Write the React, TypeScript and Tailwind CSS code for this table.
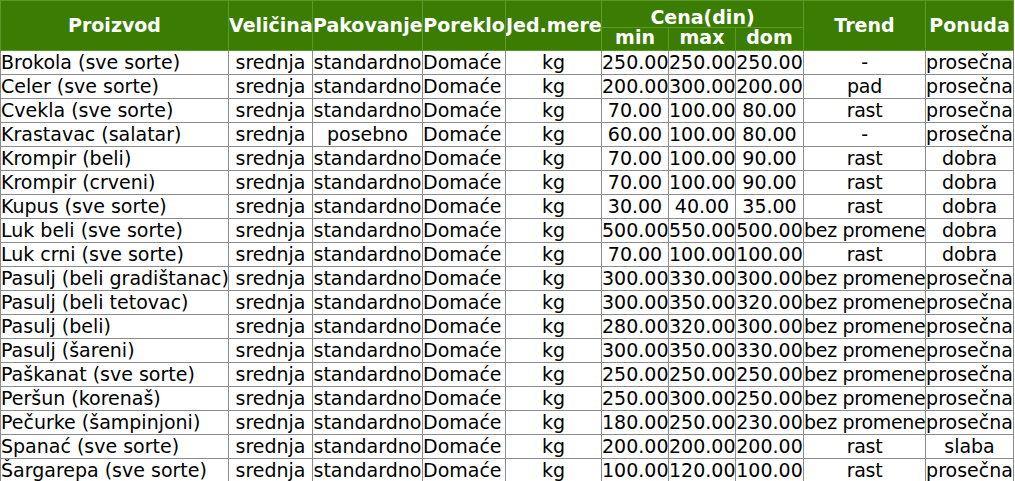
const rows: string[][] = [
	["Brokola (sve sorte)", "standardno", "250.00", "250.00", "250.00", "-", "prosečna"],
	["Celer (sve sorte)", "standardno", "200.00", "300.00", "200.00", "pad", "prosečna"],
	["Cvekla (sve sorte)", "standardno", "70.00", "100.00", "80.00", "rast", "prosečna"],
	["Krastavac (salatar)", "posebno", "60.00", "100.00", "80.00", "-", "prosečna"],
	["Krompir (beli)", "standardno", "70.00", "100.00", "90.00", "rast", "dobra"],
	["Krompir (crveni)", "standardno", "70.00", "100.00", "90.00", "rast", "dobra"],
	["Kupus (sve sorte)", "standardno", "30.00", "40.00", "35.00", "rast", "dobra"],
	["Luk beli (sve sorte)", "standardno", "500.00", "550.00", "500.00", "bez promene", "dobra"],
	["Luk crni (sve sorte)", "standardno", "70.00", "100.00", "100.00", "rast", "dobra"],
	["Pasulj (beli gradištanac)", "standardno", "300.00", "330.00", "300.00", "bez promene", "prosečna"],
	["Pasulj (beli tetovac)", "standardno", "300.00", "350.00", "320.00", "bez promene", "prosečna"],
	["Pasulj (beli)", "standardno", "280.00", "320.00", "300.00", "bez promene", "prosečna"],
	["Pasulj (šareni)", "standardno", "300.00", "350.00", "330.00", "bez promene", "prosečna"],
	["Paškanat (sve sorte)", "standardno", "250.00", "250.00", "250.00", "bez promene", "prosečna"],
	["Peršun (korenaš)", "standardno", "250.00", "300.00", "250.00", "bez promene", "prosečna"],
	["Pečurke (šampinjoni)", "standardno", "180.00", "250.00", "230.00", "bez promene", "prosečna"],
	["Spanać (sve sorte)", "standardno", "200.00", "200.00", "200.00", "rast", "slaba"],
	["Šargarepa (sve sorte)", "standardno", "100.00", "120.00", "100.00", "rast", "prosečna"],
]

const th = "border border-[#5a9a2a] p-0 font-bold text-white text-center leading-none whitespace-nowrap overflow-hidden"
const td = "border border-[#8c8c8c] p-0 h-[24px] leading-none whitespace-nowrap overflow-hidden"

export default function App() {
	return (
		<div className="bg-white w-[1015px] h-[481px] overflow-hidden font-['Verdana','DejaVu_Sans',sans-serif] text-[19px] text-black">
			<table className="table-fixed border-collapse w-[1013px]">
				<colgroup>
					<col className="w-[228px]" />
					<col className="w-[84px]" />
					<col className="w-[110px]" />
					<col className="w-[83px]" />
					<col className="w-[96px]" />
					<col className="w-[67px]" />
					<col className="w-[67px]" />
					<col className="w-[68px]" />
					<col className="w-[122px]" />
					<col className="w-[88px]" />
				</colgroup>
				<thead className="bg-[#3b7d03]">
					<tr className="h-[27px]">
						<th rowSpan={2} className={th}>Proizvod</th>
						<th rowSpan={2} className={th}>Veličina</th>
						<th rowSpan={2} className={th}>Pakovanje</th>
						<th rowSpan={2} className={th}>Poreklo</th>
						<th rowSpan={2} className={th}>Jed.mere</th>
						<th colSpan={3} className={th + " align-bottom"}>Cena(din)</th>
						<th rowSpan={2} className={th}>Trend</th>
						<th rowSpan={2} className={th}>Ponuda</th>
					</tr>
					<tr className="h-[23px]">
						<th className={th + " align-top"}>min</th>
						<th className={th + " align-top"}>max</th>
						<th className={th + " align-top"}>dom</th>
					</tr>
				</thead>
				<tbody>
					{rows.map((r) => (
						<tr key={r[0]}>
							<td className={td + " text-left"}>{r[0]}</td>
							<td className={td + " text-center"}>srednja</td>
							<td className={td + " text-center"}>{r[1]}</td>
							<td className={td + " text-left"}>Domaće</td>
							<td className={td + " text-center"}>kg</td>
							<td className={td + " text-center"}>{r[2]}</td>
							<td className={td + " text-center"}>{r[3]}</td>
							<td className={td + " text-center"}>{r[4]}</td>
							<td className={td + " text-center tracking-[-0.3px]"}>{r[5]}</td>
							<td className={td + " text-center"}>{r[6]}</td>
						</tr>
					))}
				</tbody>
			</table>
		</div>
	)
}
